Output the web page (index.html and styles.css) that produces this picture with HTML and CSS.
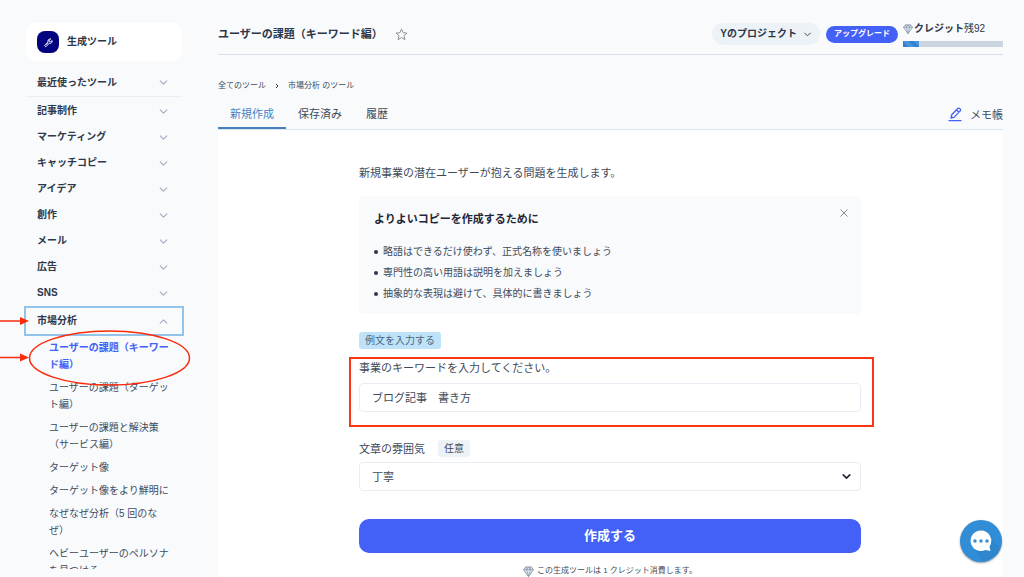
FILE: index.html
```
<!DOCTYPE html>
<html lang="ja">
<head>
<meta charset="utf-8">
<meta name="viewport" content="width=device-width, initial-scale=1">
<title>ユーザーの課題（キーワード編）</title>
<link rel="stylesheet" href="styles.css">
</head>
<body>
<svg class="defs" aria-hidden="true">
  <symbol id="down" viewBox="0 0 10 10"><path d="M2 3.500l3 3 3-3" fill="none" stroke="currentColor" stroke-linecap="round" stroke-linejoin="round"/></symbol>
  <symbol id="gem" viewBox="0 0 12 12"><path d="M3 1h6l2.500 3L6 11.500.500 4z" fill="#dfe8ee" stroke="#718096" stroke-width=".8" stroke-linejoin="round"/><path d="M.5 4h11M3 1l1 3 2 7.500L8 4l1-3M4 4l2-3 2 3" fill="none" stroke="#718096" stroke-width=".6"/></symbol>
</svg>
<div class="app">
  <aside class="sidebar">
    <div class="brand">
      <span class="brand-icon"><svg viewBox="0 0 24 24"><path d="M14.500 4.500a5 5 0 0 0-3.500 6.500l-7 6.500a2.300 2.300 0 0 0 3 3.200l6.500-7a5 5 0 0 0 6.500-6L17 10.500l-3-.5-.5-3 3.500-3z" fill="none" stroke="#fff" stroke-width="2" stroke-linejoin="round"/><path d="M7 17.500l5-5" stroke="#fff" stroke-width="1.500"/></svg></span>
      <span>生成ツール</span>
    </div>
    <nav class="menu" aria-label="生成ツール">
      <button class="menu-row recent">最近使ったツール<svg><use href="#down"/></svg></button>
      <button class="menu-row">記事制作<svg><use href="#down"/></svg></button>
      <button class="menu-row">マーケティング<svg><use href="#down"/></svg></button>
      <button class="menu-row">キャッチコピー<svg><use href="#down"/></svg></button>
      <button class="menu-row">アイデア<svg><use href="#down"/></svg></button>
      <button class="menu-row">創作<svg><use href="#down"/></svg></button>
      <button class="menu-row">メール<svg><use href="#down"/></svg></button>
      <button class="menu-row">広告<svg><use href="#down"/></svg></button>
      <button class="menu-row">SNS<svg><use href="#down"/></svg></button>
      <button class="menu-row open" aria-expanded="true">市場分析<svg><use href="#down"/></svg></button>
      <ul class="submenu">
        <li><a class="current" href="#">ユーザーの課題（キーワード編）</a></li>
        <li><a href="#">ユーザーの課題（ターゲット編）</a></li>
        <li><a href="#">ユーザーの課題と解決策（サービス編）</a></li>
        <li><a href="#">ターゲット像</a></li>
        <li><a href="#">ターゲット像をより鮮明に</a></li>
        <li><a href="#">なぜなぜ分析（5 回のなぜ）</a></li>
        <li><a href="#">ヘビーユーザーのペルソナを見つける</a></li>
      </ul>
    </nav>
  </aside>

  <main class="main">
    <header class="topbar">
      <h1>ユーザーの課題（キーワード編）</h1>
      <button class="star" aria-label="お気に入り"><svg viewBox="0 0 14 14"><path d="M7 1.200l1.700 3.900 4.200.4-3.200 2.800 1 4.200L7 10.300l-3.700 2.200 1-4.200L1.100 5.500l4.200-.4z" fill="none" stroke="#858a94" stroke-linejoin="round"/></svg></button>
      <button class="project">Yのプロジェクト<svg><use href="#down"/></svg></button>
      <button class="upgrade">アップグレード</button>
      <div class="credit">
        <div class="credit-text"><svg><use href="#gem"/></svg><span><b>クレジット</b>残92</span></div>
        <div class="bar"><div class="bar-fill"></div></div>
      </div>
    </header>

    <nav class="crumbs" aria-label="パンくず">
      <a href="#">全てのツール</a>
      <svg viewBox="0 0 6 8"><path d="M2 2l2 2-2 2" fill="none" stroke="#2d3748"/></svg>
      <a href="#">市場分析 のツール</a>
    </nav>

    <div class="tabs">
      <button class="tab active">新規作成</button>
      <button class="tab">保存済み</button>
      <button class="tab">履歴</button>
      <button class="memo"><svg viewBox="0 0 14 15"><path d="M3 11l.7-3.200 6-6.300a1.300 1.300 0 0 1 2 0l.5.500a1.300 1.300 0 0 1 0 1.900l-6 6.200zM8.600 3l2.400 2.500M.5 13.700h13" fill="none" stroke="#4360f7" stroke-width="1.300" stroke-linejoin="round"/></svg>メモ帳</button>
    </div>

    <section class="panel">
      <form class="form">
        <p class="intro">新規事業の潜在ユーザーが抱える問題を生成します。</p>
        <div class="tips">
          <div class="tips-head">
            <h2>よりよいコピーを作成するために</h2>
            <button type="button" class="close" aria-label="閉じる"><svg viewBox="0 0 10 10"><path d="M1.500 1.500l7 7M8.500 1.500l-7 7" stroke="#858a94" fill="none"/></svg></button>
          </div>
          <ul>
            <li>略語はできるだけ使わず、正式名称を使いましょう</li>
            <li>専門性の高い用語は説明を加えましょう</li>
            <li>抽象的な表現は避けて、具体的に書きましょう</li>
          </ul>
        </div>
        <button type="button" class="example">例文を入力する</button>
        <div class="field keyword">
          <label for="keyword">事業のキーワードを入力してください。</label>
          <input id="keyword" type="text" value="ブログ記事　書き方">
          <span class="mark-box"></span>
        </div>
        <div class="field">
          <div class="label-row"><label for="tone">文章の雰囲気</label><span class="optional">任意</span></div>
          <div class="select-wrap">
            <select id="tone"><option>丁寧</option></select>
            <svg><use href="#down"/></svg>
          </div>
        </div>
        <button type="button" class="submit">作成する</button>
        <p class="note"><svg><use href="#gem"/></svg>この生成ツールは 1 クレジット消費します。</p>
      </form>
    </section>
  </main>
</div>

<svg class="marks" viewBox="0 0 200 400" aria-hidden="true">
  <g fill="none" stroke="#fb2b0b" stroke-width="1.500">
    <ellipse cx="109.500" cy="358" rx="80" ry="27"/>
    <path d="M0 321h22M0 357.500h22"/>
  </g>
  <path d="M20 317l9 4-9 4zM20 353.500l9 4-9 4z" fill="#fb2b0b"/>
</svg>

<button class="chat" aria-label="チャット">
  <svg viewBox="0 0 42 42">
    <path d="M14 28l8 13c8 0 15-5 18-13L29 16z" fill="#2e86cd"/>
    <path d="M21 10.500a10.300 10.300 0 1 0 4.500 19.500l5 1-1-4.500A10.300 10.300 0 0 0 21 10.500z" fill="#fff"/>
    <g fill="#318dd6"><circle cx="15" cy="21" r="1.700"/><circle cx="21" cy="21" r="1.700"/><circle cx="27" cy="21" r="1.700"/></g>
  </svg>
</button>
</body>
</html>
```
FILE: styles.css
```
* { box-sizing: border-box; }

body {
  margin: 0;
  background: #f8fafc;
  color: #414a5a;
  font-family: "Liberation Sans", "Noto Sans CJK JP", sans-serif;
  font-size: 11px;
  line-height: 16px;
}

button, input, select { font: inherit; color: inherit; }
button { border: 0; padding: 0; background: none; cursor: pointer; }
a { color: inherit; text-decoration: none; }
h1, h2, p, ul { margin: 0; padding: 0; }
svg { display: block; flex: none; }
.defs { position: absolute; width: 0; height: 0; }

.app {
  display: grid;
  grid-template-columns: 184px minmax(0, 1fr);
  column-gap: 34px;
  height: 100vh;
  padding-right: 21px;
}

/* Sidebar */
.sidebar {
  display: flex;
  flex-direction: column;
  min-height: 0;
  padding: 23px 0 8px 24px;
}
.brand {
  display: flex;
  align-items: center;
  gap: 8px;
  margin: 0 2px;
  padding: 8px 11px;
  border-radius: 10px;
  background: #fff;
  color: #2d3748;
  font-size: 10px;
  font-weight: 700;
}
.brand-icon {
  display: grid;
  place-items: center;
  width: 22px;
  height: 22px;
  border-radius: 8px;
  background: #03037f;
}
.brand-icon svg { width: 11px; height: 11px; }
.menu {
  flex: 1;
  min-height: 0;
  margin-top: 8px;
  overflow: hidden;
}
.menu-row {
  display: flex;
  align-items: center;
  justify-content: space-between;
  width: 100%;
  height: 26px;
  padding: 0 15px 0 13px;
  color: #2d3748;
  font-size: 10px;
  font-weight: 700;
}
.menu-row svg { width: 11px; height: 11px; color: #a0aec0; }
.menu-row.recent {
  width: auto;
  min-width: calc(100% - 4px);
  height: 28px;
  margin: 0 2px 1px;
  padding: 0 13px 0 11px;
  border-bottom: 1px solid #e9eef7;
}
.menu-row.open {
  height: 30px;
  padding: 0 13px 0 11px;
  border: 2px solid #92c3ea;
}
.open svg { transform: rotate(180deg); }
.submenu {
  display: flex;
  flex-direction: column;
  gap: 6px;
  padding: 3px 14px 0 25px;
  list-style: none;
  font-size: 10px;
  line-height: 17px;
}
.submenu a { display: block; }
.submenu .current { color: #4360f7; font-weight: 700; }

/* Header */
.main {
  display: flex;
  flex-direction: column;
  min-height: 0;
  overflow: hidden;
}
.topbar {
  display: flex;
  align-items: center;
  flex: none;
  height: 55px;
  padding-top: 14px;
  border-bottom: 1px solid #d5e0ec;
}
h1 { color: #2d3748; font-size: 11px; }
.star { margin: 0 auto 0 12px; }
.star svg { width: 13px; height: 13px; }
.project {
  display: flex;
  align-items: center;
  gap: 6px;
  height: 22px;
  padding: 0 8px;
  border-radius: 11px;
  background: #edf2f7;
  color: #2d3748;
  font-size: 10px;
  font-weight: 700;
}
.project svg { width: 9px; height: 9px; }
.upgrade {
  width: 72px;
  height: 17px;
  margin: 0 5px 0 6px;
  border-radius: 9px;
  background: #4360f7;
  color: #fff;
  font-size: 8px;
  font-weight: 700;
}
.credit { width: 100px; }
.credit-text { display: flex; align-items: center; gap: 1px; color: #2d3748; font-size: 10px; }
.credit-text svg { width: 10px; height: 10px; }
.bar { height: 6px; margin-top: 4px; background: #cbd5e0; }
.bar-fill {
  width: 16%;
  height: 100%;
  background: repeating-linear-gradient(45deg, #3182ce 0 4px, #4b93d8 4px 8px);
}

.crumbs {
  display: flex;
  align-items: center;
  flex: none;
  gap: 8px;
  margin-top: 23px;
  font-size: 8px;
}
.crumbs svg { width: 6px; height: 8px; }

.tabs {
  display: flex;
  flex: none;
  height: 36px;
  border-bottom: 1px solid #dbe5ef;
}
.tab {
  padding: 6px 12px 0;
  border-bottom: 2px solid transparent;
}
.tab.active { border-color: #4480bd; color: #4285c8; }
.memo { display: flex; align-items: center; gap: 8px; margin-left: auto; padding-top: 6px; }
.memo svg { width: 14px; height: 15px; }

/* Form */
.panel { flex: 1 0 auto; padding: 35px 1px 0 0; background: #fff; }
.form { max-width: 502px; margin: 0 auto; }
.tips {
  margin-top: 15px;
  padding: 15px 12px 10px 15px;
  border-radius: 5px;
  background: #f8fafc;
}
.tips-head { display: flex; justify-content: space-between; align-items: flex-start; }
h2 { color: #1f2838; font-size: 11px; }
.close { margin-top: -3px; }
.close svg { width: 10px; height: 10px; }
.tips ul {
  padding: 14px 0 0 10px;
  list-style: none;
  font-size: 10px;
  line-height: 21px;
}
.tips li { display: flex; align-items: center; }
.tips li::before {
  content: "";
  width: 4px;
  height: 4px;
  margin: 0 5px 0 -10px;
  border-radius: 50%;
  background: #2d3748;
}
.example {
  display: block;
  height: 17px;
  margin-top: 18px;
  padding: 0 6px;
  border-radius: 3px;
  background: #bee3f8;
  color: #49657c;
  font-size: 10px;
  line-height: 16px;
}
.field { position: relative; }
.field label { display: block; }
.keyword { margin: 11px 0 28px; }
input, select {
  display: block;
  width: 100%;
  height: 29px;
  padding: 0 12px;
  border: 1px solid #e8edf5;
  border-radius: 4px;
  background: #fff;
}
.keyword input { margin-top: 7px; padding-bottom: 2px; }
.mark-box {
  position: absolute;
  inset: -3px -13px -15px -10px;
  border: 2px solid #fb3518;
  pointer-events: none;
}
.label-row { display: flex; align-items: center; gap: 13px; margin-bottom: 5px; }
.optional {
  padding: 0 6px;
  border-radius: 3px;
  background: #edf2f7;
  font-size: 10px;
  line-height: 17px;
}
.select-wrap { position: relative; }
select { appearance: none; }
.select-wrap svg {
  position: absolute;
  top: 9px;
  right: 9px;
  width: 11px;
  height: 11px;
  color: #1f2838;
  stroke-width: 1.500;
  pointer-events: none;
}
.submit {
  display: block;
  width: 100%;
  height: 34px;
  margin-top: 28px;
  border-radius: 10px;
  background: #4360f7;
  color: #fff;
  font-size: 13px;
  font-weight: 700;
}
.note {
  display: flex;
  align-items: center;
  justify-content: center;
  gap: 3px;
  margin-top: 10px;
  font-size: 8px;
}
.note svg { width: 11px; height: 11px; }

/* Overlays */
.marks {
  position: absolute;
  top: 0;
  left: 0;
  width: 200px;
  height: 400px;
  pointer-events: none;
}
.chat {
  position: fixed;
  right: 22px;
  bottom: 15px;
  width: 42px;
  height: 42px;
  overflow: hidden;
  border-radius: 50%;
  background: #318dd6;
  box-shadow: 0 1px 2px #0006;
}
```
